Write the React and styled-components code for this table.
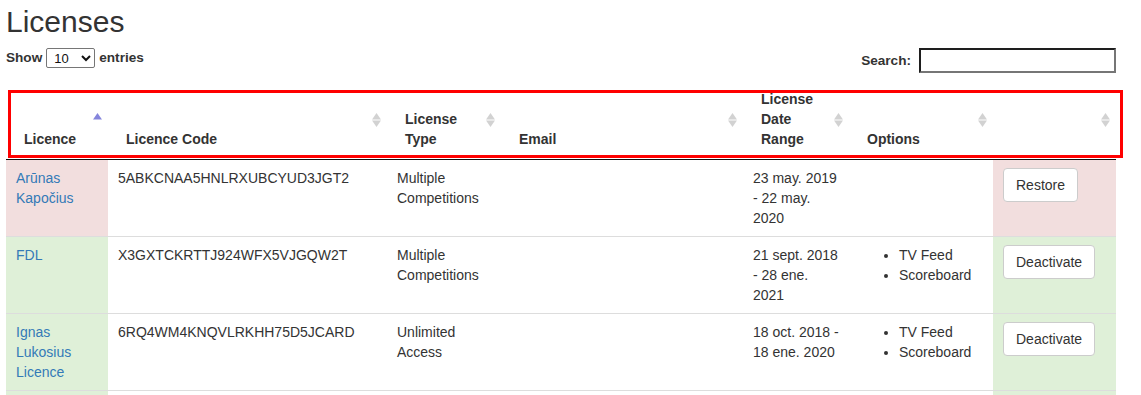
import React from 'react';
import styled, { createGlobalStyle } from 'styled-components';

const GlobalStyle = createGlobalStyle`
  html, body {
    margin: 0;
    padding: 0;
    background: #fff;
    overflow: hidden;
  }
  body {
    font-family: "Liberation Sans", Arial, Helvetica, sans-serif;
    font-size: 14px;
    line-height: 20px;
    color: #333;
  }
`;

const Page = styled.div`
  width: 1110px;
  padding: 5px 6px 0;
`;

const Title = styled.h1`
  margin: 0 0 10px;
  font-size: 30px;
  line-height: 33px;
  font-weight: 400;
  color: #333;
`;

const Controls = styled.div`
  display: flex;
  justify-content: space-between;
  align-items: flex-start;
`;

const Label = styled.label`
  display: flex;
  align-items: center;
  gap: ${(p) => p.$gap || 4}px;
  font-size: 13.6px;
  font-weight: 700;
  line-height: ${(p) => p.$height || 20}px;
  color: #333;
`;

const Select = styled.select`
  width: 49px;
  height: 20px;
  padding: 0 0 0 3px;
  font-family: "Liberation Sans", Arial, sans-serif;
  font-size: 13px;
  color: #111;
  border: 1px solid #767676;
  border-radius: 2px;
  background: #fff;
`;

const SearchInput = styled.input`
  box-sizing: border-box;
  width: 197px;
  height: 25px;
  margin: 0;
  border-style: solid;
  border-width: 2px;
  border-color: #1e1e1e #767676 #767676 #1e1e1e;
  font-family: "Liberation Sans", Arial, sans-serif;
  font-size: 13px;
`;

const TableWrap = styled.div`
  position: relative;
  margin-top: 7px;
`;

const Table = styled.table`
  width: 1110px;
  table-layout: fixed;
  border-collapse: collapse;
  border-spacing: 0;
`;

const Th = styled.th`
  position: relative;
  padding: 9px 18px 10px;
  text-align: left;
  vertical-align: bottom;
  font-weight: 700;
  color: #333;
  border-bottom: 1px solid #111;
`;

const SortIcon = styled.span`
  position: absolute;
  right: 6px;
  top: 50%;
  transform: translateY(-50%);
  width: 9px;
  height: 14px;
  display: block;
  svg {
    display: block;
  }
`;

const Tr = styled.tr`
  --state: ${(p) => (p.$state === 'danger' ? '#f2dede' : '#dff0d8')};
`;

const Td = styled.td`
  padding: 8px 10px;
  height: 60px;
  vertical-align: top;
  border-top: 1px solid #ddd;
  background: ${(p) => (p.$tinted ? 'var(--state)' : '#fff')};
  color: #333;
  word-wrap: break-word;
`;

const Link = styled.a`
  color: #337ab7;
  text-decoration: none;
`;

const Options = styled.ul`
  margin: 0;
  padding-left: 40px;
  list-style: disc;
`;

const Button = styled.button`
  padding: 6px 12px;
  font-family: "Liberation Sans", Arial, sans-serif;
  font-size: 14px;
  line-height: 20px;
  color: #333;
  background: #fff;
  border: 1px solid #ccc;
  border-radius: 4px;
  cursor: pointer;
`;

const Highlight = styled.div`
  position: absolute;
  left: 2px;
  top: 10px;
  width: 1115px;
  height: 68px;
  box-sizing: border-box;
  border: 3px solid #ff0000;
  pointer-events: none;
`;

const Sort = ({ asc }) => (
  <SortIcon>
    <svg width="9" height="14" viewBox="0 0 9 14">
      <polygon points="4.5,0 9,6.5 0,6.5" fill={asc ? '#8585dc' : '#d2d2d2'} />
      {!asc && <polygon points="0,7.5 9,7.5 4.5,14" fill="#d2d2d2" />}
    </svg>
  </SortIcon>
);

const columns = [
  { title: 'Licence', width: 102, asc: true },
  { title: 'Licence Code', width: 279 },
  { title: 'License Type', width: 114 },
  { title: 'Email', width: 242 },
  { title: 'License Date Range', width: 106 },
  { title: 'Options', width: 144 },
  { title: '', width: 123 },
];

const rows = [
  {
    state: 'danger',
    name: 'Arūnas Kapočius',
    code: '5ABKCNAA5HNLRXUBCYUD3JGT2',
    type: 'Multiple Competitions',
    email: '',
    range: '23 may. 2019 - 22 may. 2020',
    options: [],
    action: 'Restore',
  },
  {
    state: 'success',
    name: 'FDL',
    code: 'X3GXTCKRTTJ924WFX5VJGQW2T',
    type: 'Multiple Competitions',
    email: '',
    range: '21 sept. 2018 - 28 ene. 2021',
    options: ['TV Feed', 'Scoreboard'],
    action: 'Deactivate',
  },
  {
    state: 'success',
    name: 'Ignas Lukosius Licence',
    code: '6RQ4WM4KNQVLRKHH75D5JCARD',
    type: 'Unlimited Access',
    email: '',
    range: '18 oct. 2018 - 18 ene. 2020',
    options: ['TV Feed', 'Scoreboard'],
    action: 'Deactivate',
  },
  // next row only shows its tinted edge at the bottom of the frame
  { state: 'success', code: 'more', options: [] },
];

export default function App() {
  return (
    <>
      <GlobalStyle />
      <Page>
        <Title>Licenses</Title>
        <Controls>
          <Label>
            Show
            <Select defaultValue="10">
              <option value="10">10</option>
              <option value="25">25</option>
              <option value="50">50</option>
              <option value="100">100</option>
            </Select>
            entries
          </Label>
          <Label $gap={8} $height={25}>
            Search:
            <SearchInput type="search" />
          </Label>
        </Controls>
        <TableWrap>
          <Table>
            <colgroup>
              {columns.map((c, i) => (
                <col key={i} style={{ width: c.width }} />
              ))}
            </colgroup>
            <thead>
              <tr>
                {columns.map((c, i) => (
                  <Th key={i}>
                    {c.title}
                    <Sort asc={c.asc} />
                  </Th>
                ))}
              </tr>
            </thead>
            <tbody>
              {rows.map((r) => (
                <Tr key={r.code} $state={r.state}>
                  <Td $tinted>{r.name && <Link href="#">{r.name}</Link>}</Td>
                  <Td>{r.name && r.code}</Td>
                  <Td>{r.type}</Td>
                  <Td>{r.email}</Td>
                  <Td>{r.range}</Td>
                  <Td>
                    {r.options.length > 0 && (
                      <Options>
                        {r.options.map((o) => (
                          <li key={o}>{o}</li>
                        ))}
                      </Options>
                    )}
                  </Td>
                  <Td $tinted>{r.action && <Button>{r.action}</Button>}</Td>
                </Tr>
              ))}
            </tbody>
          </Table>
          <Highlight />
        </TableWrap>
      </Page>
    </>
  );
}
